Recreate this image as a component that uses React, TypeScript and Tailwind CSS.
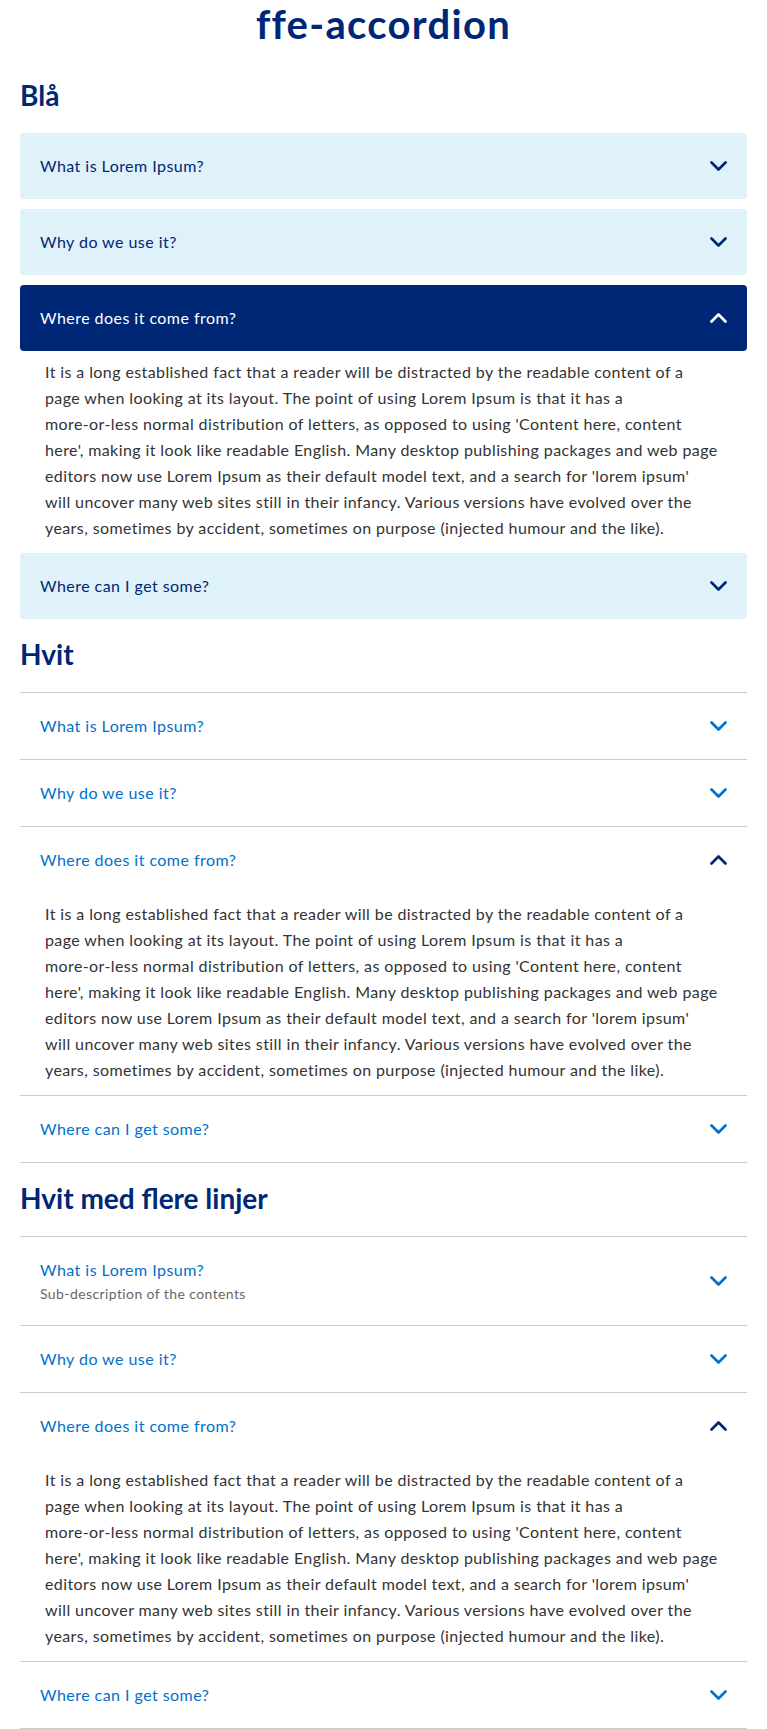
import { FC, Fragment } from "react";

// line breaks follow the reference screenshot
const bodyLines = [
  "It is a long established fact that a reader will be distracted by the readable content of a",
  "page when looking at its layout. The point of using Lorem Ipsum is that it has a",
  "more-or-less normal distribution of letters, as opposed to using 'Content here, content",
  "here', making it look like readable English. Many desktop publishing packages and web page",
  "editors now use Lorem Ipsum as their default model text, and a search for 'lorem ipsum'",
  "will uncover many web sites still in their infancy. Various versions have evolved over the",
  "years, sometimes by accident, sometimes on purpose (injected humour and the like).",
];

interface Item {
  title: string;
  sub?: string;
  open?: boolean;
}

const items: Item[] = [
  { title: "What is Lorem Ipsum?" },
  { title: "Why do we use it?" },
  { title: "Where does it come from?", open: true },
  { title: "Where can I get some?" },
];

const Chevron: FC<{ up?: boolean; className: string }> = ({ up, className }) => (
  <svg
    width="17"
    height="10"
    viewBox="0 0 17 10"
    fill="none"
    className={`shrink-0 ${className}`}
  >
    <polyline
      points={up ? "1.5,8.5 8.5,1.5 15.5,8.5" : "1.5,1.5 8.5,8.5 15.5,1.5"}
      stroke="currentColor"
      strokeWidth="2.7"
      strokeLinecap="round"
      strokeLinejoin="round"
    />
  </svg>
);

const Body: FC = () => (
  <p className="whitespace-nowrap pl-[25px] pr-[20px] pt-[8px] pb-[12px] text-[16px] leading-[26px] tracking-[0.4px] text-[#333333]">
    {bodyLines.map((line, index) => (
      <Fragment key={index}>
        {line}
        {index < bodyLines.length - 1 && <br />}
      </Fragment>
    ))}
  </p>
);

const BlueAccordion: FC = () => (
  <div className="flex flex-col">
    {items.map((item, index) => (
      <div key={index} className={item.open ? "" : "mb-[10px]"}>
        <div
          className={`flex h-[66px] items-center justify-between rounded-[4px] px-5 ${
            item.open ? "bg-[#002776] text-white" : "bg-[#dff1f9] text-[#002776]"
          }`}
        >
          <span className="text-[16px] leading-[26px] tracking-[0.45px]">{item.title}</span>
          <Chevron up={item.open} className={item.open ? "text-white" : "text-[#002776]"} />
        </div>
        {item.open && <Body />}
      </div>
    ))}
  </div>
);

const WhiteAccordion: FC<{ list: Item[] }> = ({ list }) => (
  <div className="flex flex-col border-b border-[#cccccc]">
    {list.map((item, index) => (
      <div key={index} className="border-t border-[#cccccc]">
        <div className="flex items-center justify-between px-5 py-5">
          <div className="flex flex-col">
            <span className="text-[16px] leading-[26px] tracking-[0.45px] text-[#0071cd]">
              {item.title}
            </span>
            {item.sub && (
              <span className="text-[14px] leading-[22px] tracking-[0.4px] text-[#676767]">
                {item.sub}
              </span>
            )}
          </div>
          <Chevron up={item.open} className={item.open ? "text-[#002776]" : "text-[#0071cd]"} />
        </div>
        {item.open && <Body />}
      </div>
    ))}
  </div>
);

const App: FC = () => {
  const multi: Item[] = items.map((item, index) =>
    index === 0 ? { ...item, sub: "Sub-description of the contents" } : item
  );

  return (
    <div className="bg-white px-5 font-['Lato',sans-serif]">
      <h1 className="text-center text-[40px] font-bold leading-[48px] tracking-[1.3px] text-[#002776]">
        ffe-accordion
      </h1>

      <h2 className="mt-[30px] mb-[21px] text-[28px] font-bold leading-[34px] text-[#002776]">
        Blå
      </h2>
      <BlueAccordion />

      <h2 className="mt-[8px] mb-[21px] text-[28px] font-bold leading-[34px] text-[#002776]">
        Hvit
      </h2>
      <WhiteAccordion list={items} />

      <h2 className="mt-[18px] mb-[21px] text-[28px] font-bold leading-[34px] text-[#002776]">
        Hvit med flere linjer
      </h2>
      <WhiteAccordion list={multi} />
    </div>
  );
};

export default App;
